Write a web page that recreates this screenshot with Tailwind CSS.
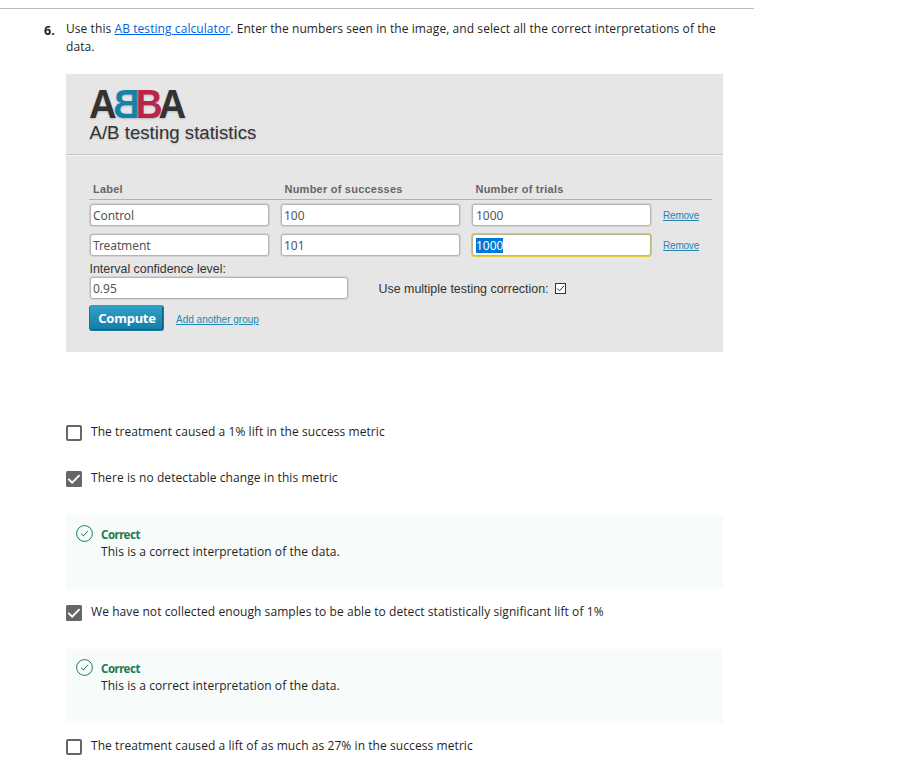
<!DOCTYPE html>
<html lang="en">
<head>
<meta charset="utf-8">
<title>AB testing quiz</title>
<script src="https://cdn.jsdelivr.net/npm/@tailwindcss/browser@4"></script>
</head>
<body class="bg-white font-['Open_Sans',sans-serif] text-[12px] leading-[18px] text-[#1f1f1f]">
<main class="mt-2 h-[772px] w-[754px] overflow-hidden border-t border-[#bdbdbd] pr-[31px] pl-[44px]">
  <section class="flex pt-[11px]">
    <div class="w-[22px] shrink-0 pt-[2px] font-['Noto_Sans',sans-serif] text-[12.5px] font-bold">6.</div>
    <p class="h-[54px] tracking-[0.075px] whitespace-nowrap">Use this <a class="text-[#0062e4] underline" href="#">AB testing calculator</a>. Enter the numbers seen in the image, and select all the correct interpretations of the<br>data.</p>
  </section>

  <section class="ml-[22px] h-[278px] w-[657px] bg-[#e6e6e6] font-['Liberation_Sans',sans-serif] text-[#333]">
    <header class="h-[81px] border-b border-[#c4c4c4] pt-[10px] pl-[23px] shadow-[0_1px_0_#f6f6f6]">
      <svg class="block overflow-visible text-[40px] font-bold [text-shadow:0_1px_2px_#bbb]" width="98" height="39" viewBox="0 0 98 39" aria-label="ABBA">
        <text transform="translate(0 34) scale(.96 1)" fill="#333">A</text>
        <text transform="translate(51.1 34) scale(-.93 1)" fill="#1282ab">B</text>
        <text transform="translate(46.8 34) scale(.93 1)" fill="#b92549">B</text>
        <text transform="translate(69.4 34) scale(.96 1)" fill="#333">A</text>
      </svg>
      <div class="pl-[0.5px] text-[18.65px] leading-[20px] whitespace-nowrap [text-shadow:0_1px_2px_#bbb]">A/B testing statistics</div>
    </header>
    <div class="pt-[27px] pl-[23px]">
      <div class="flex h-[18px] w-[623px] border-b border-[#b0b0b0] pl-1 text-[11px] leading-[15px] font-bold tracking-[0.23px] text-[#666]">
        <span class="w-[191.5px]">Label</span><span class="w-[191px]">Number of successes</span><span>Number of trials</span>
      </div>
      <div class="mt-[4px] ml-px flex h-[22px] font-['Noto_Sans',sans-serif] text-[12px] leading-[21px] text-[#555]">
        <div class="mr-[12px] h-[22px] w-[179px] rounded-[3px] border border-[#b5b5b5] bg-white pl-[2px] tracking-[-0.1px] shadow-[0_0_0_1px_#d2d2d2]">Control</div>
        <div class="mr-[12px] h-[22px] w-[179px] rounded-[3px] border border-[#b5b5b5] bg-white pl-[2px] shadow-[0_0_0_1px_#d2d2d2]">100</div>
        <div class="mr-[12px] h-[22px] w-[179px] rounded-[3px] border border-[#b5b5b5] bg-white pl-[3px] shadow-[0_0_0_1px_#d2d2d2]">1000</div>
        <a class="pt-px font-['Liberation_Sans',sans-serif] text-[10px] tracking-[-0.2px] text-[#2189b0] underline" href="#">Remove</a>
      </div>
      <div class="mt-[8px] ml-px flex h-[22px] font-['Noto_Sans',sans-serif] text-[12px] leading-[21px] text-[#555]">
        <div class="mr-[12px] h-[22px] w-[179px] rounded-[3px] border border-[#b5b5b5] bg-white pl-[2px] tracking-[-0.1px] shadow-[0_0_0_1px_#d2d2d2]">Treatment</div>
        <div class="mr-[12px] h-[22px] w-[179px] rounded-[3px] border border-[#b5b5b5] bg-white pl-[2px] shadow-[0_0_0_1px_#d2d2d2]">101</div>
        <div class="mr-[12px] flex h-[22px] w-[179px] items-center rounded-[3px] border border-[#bcb68a] bg-white pl-[3px] shadow-[0_0_0_1px_#dccb3f]"><span class="h-[15px] bg-[#0078d7] leading-[15px] text-white">1000</span></div>
        <a class="pt-px font-['Liberation_Sans',sans-serif] text-[10px] tracking-[-0.2px] text-[#2189b0] underline" href="#">Remove</a>
      </div>
      <div class="h-[21px] pt-[5px] pl-[0.5px] text-[12.4px] leading-[16px]">Interval confidence level:</div>
      <div class="ml-px flex h-[22px]">
        <div class="h-[22px] w-[258px] rounded-[3px] border border-[#b5b5b5] bg-white pl-[2px] font-['Noto_Sans',sans-serif] text-[12px] leading-[21px] text-[#555] shadow-[0_0_0_1px_#d2d2d2]">0.95</div>
        <div class="ml-[30.5px] text-[12.45px] leading-[24px]">Use multiple testing correction:</div>
        <svg class="mt-[6px] ml-[6.5px]" width="12" height="12" viewBox="0 0 12 12" fill="none"><rect x=".5" y=".5" width="10" height="10" fill="#fff" stroke="#333"/><path d="M2.3 5.5 4.5 7.8 9 2.8" stroke="#333"/></svg>
      </div>
      <div class="mt-[6px] flex">
        <div class="h-[26px] w-[75px] rounded-[3px] border border-[#16789d] border-t-[#3a9bbf] bg-linear-to-b from-[#30a0ca] to-[#157da5] pl-px text-center font-['Noto_Sans',sans-serif] text-[13px] leading-[25px] font-bold tracking-[-0.25px] text-white shadow-[inset_-1px_-1px_0_#0f6383]">Compute</div>
        <a class="ml-3 text-[10px] leading-[30px] text-[#2189b0] underline" href="#">Add another group</a>
      </div>
    </div>
  </section>

  <section class="mt-[71px] ml-[22px] w-[657px] tracking-[0.075px]">
    <div class="flex h-[46px]">
      <div class="mt-[2px] size-4 rounded-[2px] border-2 border-[#666] bg-white"></div>
      <p class="ml-[9px] whitespace-nowrap">The treatment caused a 1% lift in the success metric</p>
    </div>
    <div class="flex h-[46px]">
      <svg class="mt-[2px]" width="16" height="16" viewBox="0 0 16 16" fill="none"><rect width="16" height="16" rx="1.5" fill="#666"/><path d="M2.3 7.8 6.2 11.7 13.6 4.1" stroke="#fff" stroke-width="1.9"/></svg>
      <p class="ml-[9px] whitespace-nowrap">There is no detectable change in this metric</p>
    </div>
    <div class="flex h-[74px] bg-[#f7fbf9] pt-[10px] pl-[10px]">
      <svg width="17" height="17" viewBox="0 0 17 17" fill="none" stroke="#1d7c50"><circle cx="8.5" cy="8.5" r="7.9"/><path d="M5 8.7 7.4 11 12 5.8"/></svg>
      <div class="ml-2"><p class="h-[18px] font-['Noto_Sans',sans-serif] text-[11.5px] leading-[20px] font-bold tracking-[-0.5px] text-[#1d7c50]">Correct</p><p class="whitespace-nowrap">This is a correct interpretation of the data.</p></div>
    </div>
    <div class="flex h-[60px] pt-[14px]">
      <svg class="mt-[2px]" width="16" height="16" viewBox="0 0 16 16" fill="none"><rect width="16" height="16" rx="1.5" fill="#666"/><path d="M2.3 7.8 6.2 11.7 13.6 4.1" stroke="#fff" stroke-width="1.9"/></svg>
      <p class="ml-[9px] whitespace-nowrap">We have not collected enough samples to be able to detect statistically significant lift of 1%</p>
    </div>
    <div class="flex h-[74px] bg-[#f7fbf9] pt-[10px] pl-[10px]">
      <svg width="17" height="17" viewBox="0 0 17 17" fill="none" stroke="#1d7c50"><circle cx="8.5" cy="8.5" r="7.9"/><path d="M5 8.7 7.4 11 12 5.8"/></svg>
      <div class="ml-2"><p class="h-[18px] font-['Noto_Sans',sans-serif] text-[11.5px] leading-[19px] font-bold tracking-[-0.5px] text-[#1d7c50]">Correct</p><p class="whitespace-nowrap">This is a correct interpretation of the data.</p></div>
    </div>
    <div class="flex pt-[14px]">
      <div class="mt-[2px] size-4 rounded-[2px] border-2 border-[#666] bg-white"></div>
      <p class="ml-[9px] whitespace-nowrap">The treatment caused a lift of as much as 27% in the success metric</p>
    </div>
  </section>
</main>
</body>
</html>
